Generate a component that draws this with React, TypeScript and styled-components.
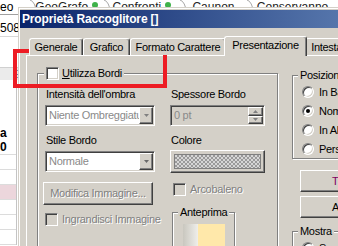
import styled, { createGlobalStyle, css } from 'styled-components';

const FACE = '#d4d0c8';

const raised = css`
  border: 1px solid;
  border-color: #fff #404040 #404040 #fff;
  box-shadow: inset -1px -1px 0 #808080, inset 1px 1px 0 ${FACE};
`;

const sunken = css`
  border: 1px solid;
  border-color: #808080 #fff #fff #808080;
  box-shadow: inset 1px 1px 0 #404040, inset -1px -1px 0 ${FACE};
`;

const etched = css`
  border: 1px solid #808080;
  box-shadow: inset 1px 1px 0 #fff, 1px 1px 0 #fff;
`;

const disabledText = css`
  color: #808080;
  text-shadow: 1px 1px 0 #fff;
`;

const GlobalStyle = createGlobalStyle`
  html, body { margin: 0; padding: 0; background: #fff; }
  body { width: 338px; height: 246px; overflow: hidden; }
  * { box-sizing: border-box; }
`;

const Screen = styled.div`
  position: relative;
  width: 338px;
  height: 246px;
  overflow: hidden;
  background: #fff;
  font-family: 'Liberation Sans', Arial, sans-serif;
  font-size: 11px;
  letter-spacing: -0.3px;
  color: #000;
`;

/* ---- application behind the dialog ---- */

const BackApp = styled.div`
  display: flex;
  flex-direction: column;
  width: 100%;
  height: 100%;
`;

const DocTabs = styled.div`
  display: flex;
  height: 15px;
  border-bottom: 1px solid #a0a0a0;
  font-size: 12px;
  line-height: 14px;
  letter-spacing: 0;
`;

const DocTitle = styled.div`
  width: 30px;
`;

const DocTab = styled.div<{ $width: number }>`
  position: relative;
  width: ${(p) => p.$width}px;
  display: flex;
  justify-content: center;
  gap: 4px;
  color: #222;
`;

const TabCurve = styled.svg`
  position: absolute;
  left: 0;
  top: 0;
`;

const StatusDot = styled.span`
  width: 6px;
  height: 6px;
  margin-top: 2px;
  border-radius: 50%;
  background: #3fb24a;
`;

const LeftPane = styled.div`
  width: 19px;
  display: flex;
  flex-direction: column;
  font-size: 12px;
  letter-spacing: 0;
`;

const NumberCell = styled.div`
  height: 22px;
  padding-top: 6px;
  line-height: 14px;
  border-bottom: 1px solid #d8d8d8;
`;

const BlankCell = styled.div`
  height: 31px;
  border-bottom: 1px solid #d0d0d0;
`;

const HeaderBand = styled.div`
  height: 12px;
  padding-left: 14px;
  background: #ebebeb;
  color: #6a86ba;
  font-size: 11px;
  line-height: 12px;
  overflow: hidden;
`;

const GridArea = styled.div`
  width: 17px;
  flex: 1;
  border-right: 1px solid #c4c4c4;
  display: flex;
  flex-direction: column;
`;

const TotalCell = styled.div`
  height: 75px;
  padding-top: 46px;
  line-height: 14px;
  font-weight: bold;
  border-bottom: 1px solid #dcdcdc;
`;

const GridRow = styled.div<{ $tint?: boolean }>`
  height: 15px;
  border-bottom: 1px solid #dcdcdc;
  background: ${(p) => (p.$tint ? '#ecd6dc' : '#fff')};
`;

/* ---- dialog ---- */

const Dialog = styled.div`
  position: absolute;
  left: 18px;
  top: 7px;
  width: 420px;
  height: 260px;
  padding: 3px 0 0 2px;
  background: ${FACE};
  box-shadow: inset 1px 1px 0 ${FACE}, inset 2px 2px 0 #fff;
  display: flex;
  flex-direction: column;
`;

const TitleBar = styled.div`
  height: 18px;
  padding-left: 2px;
  background: linear-gradient(90deg, #0a246a 0px, #5575ab 318px, #a6caf0 620px);
  color: #fff;
  font-size: 12px;
  font-weight: bold;
  letter-spacing: -0.15px;
  line-height: 18px;
`;

const DialogBody = styled.div`
  flex: 1;
  display: flex;
  flex-direction: column;
  padding: 8px 0 0 6px;
`;

const TabStrip = styled.div`
  position: relative;
  z-index: 1;
  display: flex;
  align-items: flex-end;
  height: 19px;
  padding-left: 3px;
`;

const Tab = styled.div<{ $width: number; $active?: boolean }>`
  width: ${(p) => p.$width}px;
  height: ${(p) => (p.$active ? 20 : 17)}px;
  margin: ${(p) => (p.$active ? '0 -2px -1px -2px' : '0')};
  padding-top: 1px;
  border: 1px solid;
  border-bottom: none;
  border-color: #fff #404040 #fff #fff;
  border-radius: 3px 3px 0 0;
  box-shadow: inset -1px 0 0 #808080;
  background: ${FACE};
  text-align: center;
  line-height: 15px;
  white-space: nowrap;
  overflow: hidden;
  position: relative;
  z-index: ${(p) => (p.$active ? 2 : 1)};
`;

const Panel = styled.div`
  flex: 1;
  display: flex;
  align-items: flex-start;
  gap: 14px;
  padding: 17px 0 0 10px;
  border-top: 1px solid #fff;
  border-left: 1px solid #fff;
`;

const Group = styled.div<{ $width: number; $height: number; $top?: number; $left?: number }>`
  position: relative;
  flex: none;
  width: ${(p) => p.$width}px;
  height: ${(p) => p.$height}px;
  margin: ${(p) => p.$top ?? 0}px 0 0 ${(p) => p.$left ?? 0}px;
  ${etched};
`;

const Legend = styled.div<{ $left: number }>`
  position: absolute;
  top: -7px;
  left: ${(p) => p.$left}px;
  display: flex;
  align-items: center;
  gap: 3px;
  height: 13px;
  padding: 0 2px;
  background: ${FACE};
  line-height: 13px;
  white-space: nowrap;
`;

const BorderGroupBody = styled.div`
  display: flex;
  gap: 15px;
  padding: 14px 0 0 7px;
`;

const Column = styled.div<{ $width: number }>`
  width: ${(p) => p.$width}px;
  display: flex;
  flex-direction: column;
  align-items: flex-start;
`;

const FieldLabel = styled.div<{ $gap?: number }>`
  height: 13px;
  margin-bottom: ${(p) => p.$gap ?? 4}px;
  padding-left: 1px;
  line-height: 13px;
  white-space: nowrap;
`;

const Combo = styled.div`
  width: 110px;
  height: 21px;
  margin-bottom: 8px;
  padding: 1px;
  display: flex;
  background: #fff;
  ${sunken};
`;

const ComboText = styled.div`
  flex: 1;
  padding-left: 2px;
  line-height: 17px;
  color: #8a8a8a;
  white-space: nowrap;
  overflow: hidden;
`;

const DropButton = styled.div`
  width: 14px;
  display: flex;
  align-items: center;
  justify-content: center;
  background: ${FACE};
  ${raised};
`;

const SpinField = styled.div`
  width: 95px;
  height: 21px;
  margin-bottom: 8px;
  padding: 1px;
  display: flex;
  background: ${FACE};
  ${sunken};
`;

const SpinText = styled.div`
  flex: 1;
  padding-left: 2px;
  line-height: 17px;
  color: #8a8a8a;
`;

const SpinButtons = styled.div`
  width: 15px;
  display: flex;
  flex-direction: column;
`;

const SpinButton = styled.div`
  flex: 1;
  display: flex;
  align-items: center;
  justify-content: center;
  background: ${FACE};
  ${raised};
`;

const ColorButton = styled.div`
  width: 95px;
  height: 23px;
  padding: 3px;
  display: flex;
  ${raised};
`;

const Swatch = styled.div`
  flex: 1;
  border: 1px solid #808080;
  background: repeating-conic-gradient(#9a9a9a 0 25%, #d6d6d6 0 50%) 0 0 / 4px 4px;
`;

const PushButton = styled.div`
  width: 110px;
  height: 23px;
  margin: 2px 0 0 -2px;
  text-align: center;
  line-height: 21px;
  ${raised};
  ${disabledText};
`;

const CheckRow = styled.div<{ $top: number; $left?: number }>`
  display: flex;
  align-items: center;
  gap: 4px;
  height: 13px;
  margin: ${(p) => p.$top}px 0 0 ${(p) => p.$left ?? 0}px;
`;

const CheckBox = styled.span<{ $disabled?: boolean }>`
  flex: none;
  width: 13px;
  height: 13px;
  background: ${(p) => (p.$disabled ? FACE : '#fff')};
  ${sunken};
`;

const CheckText = styled.span<{ $disabled?: boolean }>`
  line-height: 13px;
  white-space: nowrap;
  ${(p) => p.$disabled && disabledText};
`;

const PreviewGroupBody = styled.div`
  display: flex;
  padding: 11px 0 0 10px;
`;

const GradientStrip = styled.div`
  width: 15px;
  height: 40px;
  background: linear-gradient(90deg, #c9c7bf, #efeeea);
`;

const SampleFill = styled.div`
  width: 27px;
  height: 40px;
  background: #ffe8aa;
`;

const RightColumn = styled.div`
  width: 130px;
  margin-top: 2px;
  display: flex;
  flex-direction: column;
`;

const RadioList = styled.div`
  display: flex;
  flex-direction: column;
  padding: 6px 0 0 9px;
`;

const RadioRow = styled.div`
  display: flex;
  align-items: center;
  gap: 5px;
  height: 19px;
  white-space: nowrap;
`;

const Radio = styled.span<{ $checked?: boolean }>`
  position: relative;
  flex: none;
  width: 12px;
  height: 12px;
  border-radius: 50%;
  border: 1px solid;
  border-color: #808080 #fff #fff #808080;
  box-shadow: inset 1px 1px 0 #404040, inset -1px -1px 0 ${FACE};
  background: #fff;

  &::after {
    content: '';
    display: ${(p) => (p.$checked ? 'block' : 'none')};
    position: absolute;
    left: 3px;
    top: 3px;
    width: 4px;
    height: 4px;
    border-radius: 50%;
    background: #000;
  }
`;

const SideButton = styled.div<{ $top: number; $color?: string }>`
  width: 90px;
  height: 22px;
  margin: ${(p) => p.$top}px 0 0 8px;
  padding-left: 31px;
  line-height: 20px;
  color: ${(p) => p.$color ?? '#000'};
  white-space: nowrap;
  ${raised};
`;

const RedMark = styled.div`
  position: absolute;
  left: 13px;
  top: 49px;
  width: 154px;
  height: 39px;
  border: 4px solid #ed1c24;
`;

const Arrow = ({ color = '#000', up = false }: { color?: string; up?: boolean }) => (
  <svg width="5" height="3" viewBox="0 0 5 3">
    <polygon points={up ? '0,3 5,3 2.5,0' : '0,0 5,0 2.5,3'} fill={color} />
  </svg>
);

const Curve = () => (
  <TabCurve width="8" height="15" viewBox="0 0 8 15">
    <path d="M0 0 Q5 1 7 14" fill="none" stroke="#a8a8a8" strokeWidth="1" />
  </TabCurve>
);

const docTabs = [
  { label: 'GeoGrafo', width: 75, dot: true },
  { label: 'Confronti', width: 77, dot: true },
  { label: 'Caunon', width: 68, dot: false },
  { label: 'Conservanno', width: 92, dot: false },
];

const positions = [
  { label: 'In Basso', checked: false },
  { label: 'Nominale', checked: true },
  { label: 'In Alto', checked: false },
  { label: 'Personalizzata', checked: false },
];

const App = () => {
  return (
    <>
      <GlobalStyle />
      <Screen>
        <BackApp>
          <DocTabs>
            <DocTitle>eo</DocTitle>
            {docTabs.map((tab) => (
              <DocTab key={tab.label} $width={tab.width}>
                <Curve />
                <span>{tab.label}</span>
                {tab.dot && <StatusDot />}
              </DocTab>
            ))}
          </DocTabs>
          <LeftPane>
            <NumberCell>508</NumberCell>
            <BlankCell />
            <HeaderBand>E</HeaderBand>
            <GridArea>
              <TotalCell>a 0</TotalCell>
              <GridRow />
              <GridRow />
              <GridRow $tint />
              <GridRow />
              <GridRow />
              <GridRow />
            </GridArea>
          </LeftPane>
        </BackApp>

        <Dialog>
          <TitleBar>Proprietà Raccoglitore []</TitleBar>
          <DialogBody>
            <TabStrip>
              <Tab $width={54}>Generale</Tab>
              <Tab $width={47}>Grafico</Tab>
              <Tab $width={96}>Formato Carattere</Tab>
              <Tab $width={83} $active>
                Presentazione
              </Tab>
              <Tab $width={68}>Intestazione</Tab>
            </TabStrip>
            <Panel>
              <Group $width={241} $height={200}>
                <Legend $left={6}>
                  <CheckBox />
                  <CheckText>
                    <u>U</u>tilizza Bordi
                  </CheckText>
                </Legend>
                <BorderGroupBody>
                  <Column $width={110}>
                    <FieldLabel>Intensità dell'ombra</FieldLabel>
                    <Combo>
                      <ComboText>Niente Ombreggiatura</ComboText>
                      <DropButton>
                        <Arrow color="#808080" />
                      </DropButton>
                    </Combo>
                    <FieldLabel>Stile Bordo</FieldLabel>
                    <Combo>
                      <ComboText>Normale</ComboText>
                      <DropButton>
                        <Arrow color="#6a6a6a" />
                      </DropButton>
                    </Combo>
                    <PushButton>Modifica Immagine...</PushButton>
                    <CheckRow $top={8}>
                      <CheckBox $disabled />
                      <CheckText $disabled>Ingrandisci Immagine</CheckText>
                    </CheckRow>
                  </Column>
                  <Column $width={95}>
                    <FieldLabel>Spessore Bordo</FieldLabel>
                    <SpinField>
                      <SpinText>0 pt</SpinText>
                      <SpinButtons>
                        <SpinButton>
                          <Arrow color="#808080" up />
                        </SpinButton>
                        <SpinButton>
                          <Arrow color="#808080" />
                        </SpinButton>
                      </SpinButtons>
                    </SpinField>
                    <FieldLabel $gap={3}>Colore</FieldLabel>
                    <ColorButton>
                      <Swatch />
                    </ColorButton>
                    <CheckRow $top={10} $left={3}>
                      <CheckBox $disabled />
                      <CheckText $disabled>Arcobaleno</CheckText>
                    </CheckRow>
                    <Group $width={63} $height={60} $top={16} $left={2}>
                      <Legend $left={5}>Anteprima</Legend>
                      <PreviewGroupBody>
                        <GradientStrip />
                        <SampleFill />
                      </PreviewGroupBody>
                    </Group>
                  </Column>
                </BorderGroupBody>
              </Group>

              <RightColumn>
                <Group $width={130} $height={84}>
                  <Legend $left={5}>Posizione</Legend>
                  <RadioList>
                    {positions.map((item) => (
                      <RadioRow key={item.label}>
                        <Radio $checked={item.checked} />
                        <span>{item.label}</span>
                      </RadioRow>
                    ))}
                  </RadioList>
                </Group>
                <SideButton $top={11} $color="#800060">
                  Titolo...
                </SideButton>
                <SideButton $top={4}>Aspetto...</SideButton>
                <Group $width={130} $height={40} $top={13}>
                  <Legend $left={5}>Mostra</Legend>
                  <RadioList>
                    <RadioRow>
                      <Radio $checked />
                      <span>Sempre</span>
                    </RadioRow>
                  </RadioList>
                </Group>
              </RightColumn>
            </Panel>
          </DialogBody>
        </Dialog>

        <RedMark />
      </Screen>
    </>
  );
};

export default App;
